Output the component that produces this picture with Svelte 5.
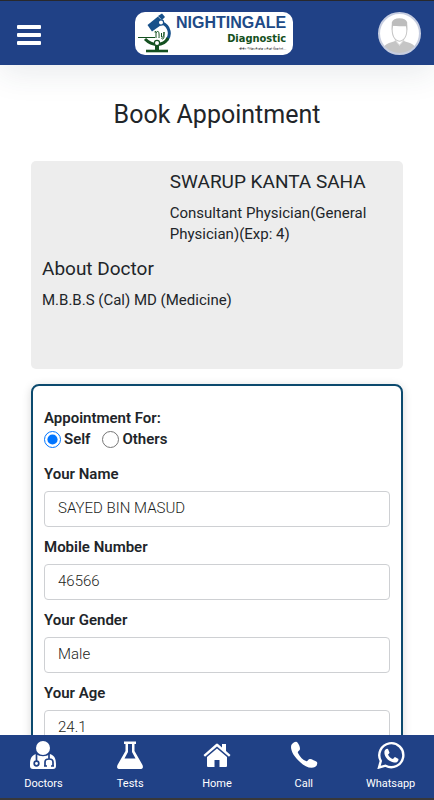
<script>
  let bookingFor = 'self';
  let name = 'SAYED BIN MASUD';
  let mobile = '46566';
  let gender = 'Male';
  let age = '24.1';
</script>

<div class="app">
  <header class="topbar">
    <button class="menu" aria-label="Menu">
      <span></span>
      <span></span>
      <span></span>
    </button>

    <a class="logo" href="#home">
      <svg class="microscope" viewBox="0 0 34 40" aria-hidden="true">
        <path d="M25 10 C33 13 34 22 30 27" fill="none" stroke="#17508a" stroke-width="3" />
        <path d="M8 26 C12 30 16 31.500 20 31.500 C25 31.500 29 29 31 25" fill="none" stroke="#145020" stroke-width="3" />
        <path d="M10.500 12 L21 3.500 L27 10 L15 18.500 Z" fill="#17508a" />
        <path d="M21 3 L25 0.500 L28 4 L25 7 Z" fill="#17508a" />
        <path d="M1 24.500 H18" stroke="#145020" stroke-width="1" />
        <path d="M20 31 V38" stroke="#145020" stroke-width="4" />
        <path d="M9 38 H31" stroke="#145020" stroke-width="2.600" />
        <circle cx="24" cy="9.500" r="2.600" fill="#fff" stroke="#17508a" stroke-width="1.2" />
        <circle cx="20" cy="30" r="2.600" fill="#fff" stroke="#145020" stroke-width="1.2" />
        <path d="M17.500 19 L19 18.500 V25 M19 20 C21 17 22.500 18 22 25 M24.500 20 V24 C25 25 27 24 27 19 V24 C26.500 27 24.500 26 24.500 25" fill="none" stroke="#145020" stroke-width="1" />
      </svg>
      <span class="brand">
        <strong>NIGHTINGALE</strong>
        <b>Diagnostic</b>
        <small>স্বাস্থ্য পরিসেবার সেরা ঠিকানা...</small>
      </span>
    </a>

    <button class="avatar" aria-label="Profile">
      <svg viewBox="0 0 42 42" aria-hidden="true">
        <circle cx="21" cy="21" r="20" fill="#fff" />
        <path d="M6 34 C8 30 13 30 17 28 L21 33 L25 28 C29 30 34 30 36 34 C33 38 28 41 21 41 C14 41 9 38 6 34 Z" fill="#c5c5c5" />
        <path d="M17 26 V28 L21 32.500 L25 28 V26" fill="#fff" stroke="#c5c5c5" stroke-width="0.8" />
        <path d="M14 13 C13 23 16 28 21 28.500 C26 28 29 23 28 13 Z" fill="#fff" stroke="#c5c5c5" stroke-width="1" />
        <path d="M13.500 18 V10 Q15 6 21 6 Q27 6 28.500 10 V18 L27.500 14 C23 14 19 14 14.500 13.500 Z" fill="#bdbdbd" />
        <circle cx="21" cy="21" r="20" fill="none" stroke="#c6cde0" stroke-width="2" />
      </svg>
    </button>
  </header>

  <main>
    <h1>Book Appointment</h1>

    <section class="doctor">
      <div class="info">
        <h2>SWARUP KANTA SAHA</h2>
        <p>Consultant Physician(General Physician)(Exp: 4)</p>
      </div>
      <h2>About Doctor</h2>
      <p>M.B.B.S (Cal) MD (Medicine)</p>
    </section>

    <form class="booking">
      <fieldset>
        <legend>Appointment For:</legend>
        <label><input type="radio" value="self" bind:group={bookingFor} />Self</label>
        <label><input type="radio" value="others" bind:group={bookingFor} />Others</label>
      </fieldset>

      <div class="field">
        <label for="name">Your Name</label>
        <input id="name" type="text" bind:value={name} />
      </div>
      <div class="field">
        <label for="mobile">Mobile Number</label>
        <input id="mobile" type="tel" bind:value={mobile} />
      </div>
      <div class="field">
        <label for="gender">Your Gender</label>
        <input id="gender" type="text" bind:value={gender} />
      </div>
      <div class="field">
        <label for="age">Your Age</label>
        <input id="age" type="text" bind:value={age} />
      </div>
    </form>
  </main>

  <nav>
    <a href="#doctors">
      <svg viewBox="0 0 28 28" aria-hidden="true">
        <circle cx="14" cy="7" r="7" fill="#fff" />
        <path d="M7 13 C1 15 1 20 1 25 Q1 28 4 28 H24 Q27 28 27 25 C27 20 27 15 21 13 C17 16 11 16 7 13 Z" fill="#fff" />
        <path d="M7.500 13 V20 M20 13 V18 M16 25 V21 C16 17 24 17 24 21 V25" fill="none" stroke="#204186" stroke-width="1.7" />
        <circle cx="7.500" cy="22.500" r="2.300" fill="#fff" stroke="#204186" stroke-width="1.7" />
        <path d="M15 25 H18 M22 25 H25" stroke="#204186" stroke-width="1.7" />
      </svg>
      Doctors
    </a>
    <a href="#tests">
      <svg viewBox="0 0 28 28" aria-hidden="true">
        <path d="M8 0.500 H20 V3 H18.500 V10 L26.500 24 Q28 28 24 28 H4 Q0 28 1.500 24 L9.500 10 V3 H8 Z" fill="#fff" />
        <path d="M12 3 H16 V11 L19.500 17.500 H8.500 L12 11 Z" fill="#204186" />
      </svg>
      Tests
    </a>
    <a href="#home">
      <svg viewBox="0 0 28 28" aria-hidden="true">
        <path d="M14 7.500 L24 16 V25 Q24 26 23 26 H16.500 V19 H11.500 V26 H5 Q4 26 4 25 V16 Z" fill="#fff" />
        <path d="M0.500 14 L13 3 Q14 2 15 3 L19 6.500 V3 H23 V10 L27.500 14 L26 15.800 L14 5.500 L2 15.800 Z" fill="#fff" />
      </svg>
      Home
    </a>
    <a href="#call">
      <svg viewBox="0 0 28 28" aria-hidden="true">
        <path d="M2 3 Q5 0 7 1 C9 3 10 6 10 8 C10 10 7 10 8 12 C10 16 13 19 16 20 C18 21 18 18 20 18 C22 18 25 20 27 21 Q28 24 25 26 C21 28 15 26 10 21 C4 16 1 10 1 6 Q1 4 2 3 Z" fill="#fff" />
      </svg>
      Call
    </a>
    <a href="#whatsapp">
      <svg viewBox="0 0 28 28" aria-hidden="true">
        <path d="M2 26.500 L3.800 20 A12 12 0 1 1 8.500 24.700 Z" fill="none" stroke="#fff" stroke-width="2.400" />
        <path d="M8 9 Q10 7 11 8 L12.500 11.500 Q12.500 12.500 11 13.500 C12 16 14 17.500 16 18 Q17.500 16 18 16 L21.500 18 C21.500 21 19 22 17 21.500 C12 20.500 8.500 17 7.500 13 Q7 10.500 8 9 Z" fill="#fff" />
      </svg>
      Whatsapp
    </a>
  </nav>
</div>

<style>
  :global(body) {
    margin: 0;
    background: #fff;
  }

  .app {
    display: flex;
    flex-direction: column;
    height: 100vh;
    box-sizing: border-box;
    border-top: 1px solid #29292c;
    border-bottom: 2px solid #38383a;
    font-family: Roboto, sans-serif;
    font-size: 15px;
    line-height: 21px;
    color: #212529;
  }

  button {
    padding: 0;
    border: 0;
    background: none;
    cursor: pointer;
  }

  .topbar {
    position: relative;
    display: flex;
    flex: none;
    align-items: center;
    justify-content: space-between;
    height: 64px;
    padding: 0 13px 0 17px;
    box-sizing: border-box;
    background: #204186;
    box-shadow: 0 8px 32px rgba(40, 60, 80, 0.1);
  }

  .menu {
    display: flex;
    flex-direction: column;
    gap: 4px;
    width: 33px;
    padding-top: 4px;
  }

  .menu span {
    width: 24px;
    height: 4px;
    border-radius: 1px;
    background: #fff;
  }

  .logo {
    display: flex;
    align-items: center;
    gap: 5px;
    width: 158px;
    height: 43px;
    padding: 0 7px 0 2px;
    box-sizing: border-box;
    border-radius: 10px;
    background: #fff;
    text-decoration: none;
  }

  .microscope {
    flex: none;
    width: 34px;
    height: 40px;
  }

  .brand {
    display: flex;
    flex: 1;
    flex-direction: column;
    align-items: flex-end;
    white-space: nowrap;
  }

  .brand strong {
    font: bold 16px/18px "Liberation Sans", sans-serif;
    color: #204a87;
  }

  .brand b {
    font: bold 11px/13px "DejaVu Sans Condensed", "DejaVu Sans", sans-serif;
    color: #145020;
  }

  .brand small {
    font-size: 4px;
    line-height: 7px;
    color: #222;
  }

  .avatar,
  .avatar svg {
    display: block;
    width: 43px;
    height: 43px;
  }

  main {
    flex: 1;
    min-height: 0;
    padding: 0 31px;
    overflow-y: auto;
    scrollbar-width: none;
  }

  h1 {
    margin: 34px 0 30px;
    font-size: 25px;
    font-weight: 400;
    line-height: 32px;
    text-align: center;
  }

  h2 {
    margin: 0 0 10px;
    font-size: 19px;
    font-weight: 400;
    line-height: 22px;
  }

  p {
    margin: 0;
  }

  .doctor {
    min-height: 208px;
    padding: 10px 11px;
    box-sizing: border-box;
    border-radius: 5px;
    background: #ededed;
  }

  .info {
    margin: 0 0 13px 36.5%;
  }

  .booking {
    margin-top: 15px;
    padding: 22px 11px;
    border: 2px solid #0c4a6e;
    border-radius: 8px;
    box-shadow: 0 2px 10px rgba(0, 0, 0, 0.16);
  }

  fieldset {
    display: flex;
    gap: 12px;
    margin: 0 0 14px;
    padding: 0;
    border: 0;
  }

  legend,
  label {
    padding: 0;
    font-weight: 600;
  }

  fieldset label {
    display: flex;
    align-items: center;
    gap: 3px;
  }

  fieldset input {
    width: 17px;
    height: 17px;
    margin: 0;
    accent-color: #0075ff;
  }

  .field {
    margin-bottom: 10px;
  }

  .field label {
    display: block;
    margin-bottom: 6px;
  }

  .field input {
    display: block;
    width: 100%;
    height: 36px;
    padding: 0 13px 2px;
    box-sizing: border-box;
    border: 1px solid #ced0d3;
    border-radius: 4px;
    background: #fff;
    font: inherit;
    font-weight: 300;
    color: #1c1e21;
  }

  nav {
    position: relative;
    display: grid;
    flex: none;
    grid-template-columns: repeat(5, 1fr);
    height: 63px;
    background: #204186;
  }

  nav a {
    display: flex;
    flex-direction: column;
    align-items: center;
    gap: 6px;
    padding-top: 6px;
    font-size: 11px;
    line-height: 18px;
    color: #fff;
    text-decoration: none;
  }

  nav svg {
    width: 28px;
    height: 28px;
  }
</style>
